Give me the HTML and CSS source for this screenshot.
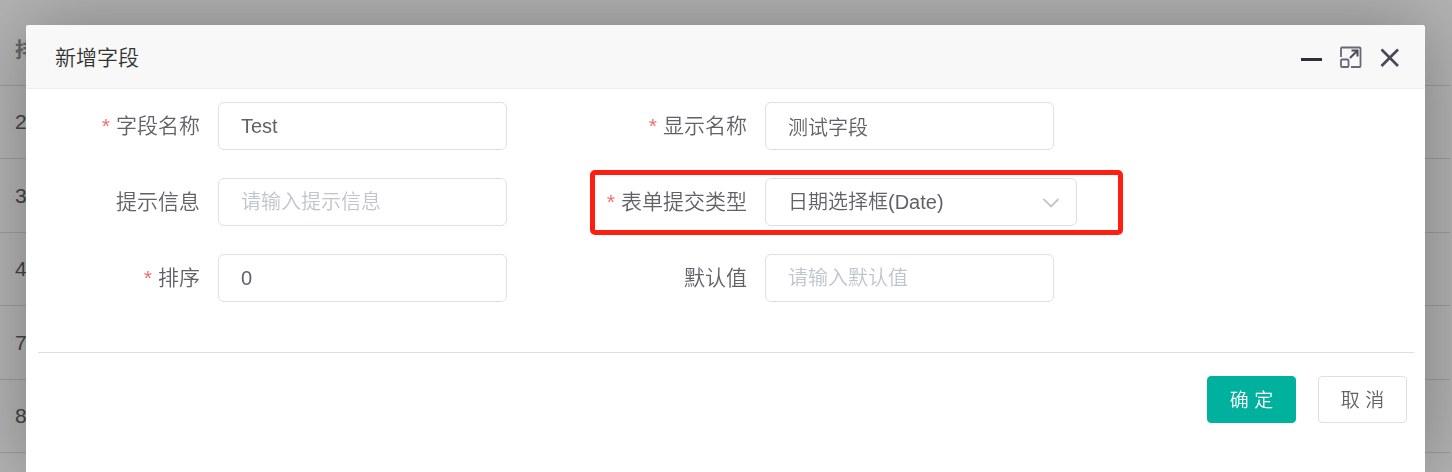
FILE: index.html
```html
<!DOCTYPE html>
<html lang="zh-CN">
<head>
<meta charset="utf-8">
<meta name="viewport" content="width=device-width, initial-scale=1">
<title>新增字段</title>
<link rel="stylesheet" href="styles.css">
</head>
<body>
<table class="list">
  <thead><tr><th>排序</th></tr></thead>
  <tbody>
    <tr><td>2</td></tr>
    <tr><td>3</td></tr>
    <tr><td>4</td></tr>
    <tr><td>7</td></tr>
    <tr><td>8</td></tr>
  </tbody>
</table>
<div class="overlay">
  <section class="dialog" role="dialog" aria-labelledby="dialog-title">
    <header class="dialog-header">
      <h1 class="dialog-title" id="dialog-title">新增字段</h1>
      <div class="dialog-tools">
        <button class="tool" type="button" aria-label="最小化">
          <svg class="tool-icon" viewBox="0 0 22 22"><path d="M0 13.500h21" stroke="#2e2d3c" stroke-width="3"/></svg>
        </button>
        <button class="tool" type="button" aria-label="最大化">
          <svg class="tool-icon" viewBox="0 0 22 22" fill="none" stroke="#6a6876" stroke-width="1.800">
            <path d="M1 11V2.500Q1 1.500 2 1.500H19.500Q20.500 1.500 20.500 2.500V20Q20.500 21 19.500 21H11"/>
            <rect x="1" y="13.500" width="7.500" height="7.500" rx="1"/>
            <path d="M10 12L17 5" stroke="#4a4857" stroke-width="2"/>
            <path d="M11.500 4.500H17.500V10.500" stroke="#4a4857" stroke-width="2"/>
          </svg>
        </button>
        <button class="tool" type="button" aria-label="关闭">
          <svg class="tool-icon" viewBox="0 0 22 22"><path d="M2.500 3.500L19 20M19 3.500L2.500 20" stroke="#4a4857" stroke-width="2.600"/></svg>
        </button>
      </div>
    </header>
    <form class="form">
      <div class="fields">
        <div class="field">
          <label class="label required" for="name">字段名称</label>
          <input class="control" id="name" type="text" value="Test">
        </div>
        <div class="field">
          <label class="label required" for="display">显示名称</label>
          <input class="control" id="display" type="text" value="测试字段">
        </div>
        <div class="field">
          <label class="label" for="hint">提示信息</label>
          <input class="control" id="hint" type="text" placeholder="请输入提示信息">
        </div>
        <div class="field highlighted">
          <label class="label required" for="type">表单提交类型</label>
          <div class="select">
            <select class="control select-control" id="type"><option>日期选择框(Date)</option></select>
            <svg class="chevron" viewBox="0 0 18 12" fill="none"><path d="M1.500 2L9 9.500L16.500 2" stroke="#c0c4cc" stroke-width="1.800"/></svg>
          </div>
        </div>
        <div class="field">
          <label class="label required" for="order">排序</label>
          <input class="control" id="order" type="text" value="0">
        </div>
        <div class="field">
          <label class="label" for="default">默认值</label>
          <input class="control" id="default" type="text" placeholder="请输入默认值">
        </div>
      </div>
      <div class="actions">
        <button class="button primary" type="button">确 定</button>
        <button class="button" type="button">取 消</button>
      </div>
    </form>
  </section>
</div>
</body>
</html>
```
FILE: styles.css
```css
* {
  box-sizing: border-box;
}

body {
  margin: 0;
  background: #fff;
  color: #606266;
  font-family: "Liberation Sans", "Noto Sans CJK SC", sans-serif;
  font-size: 21px;
}

.list {
  width: calc(100% - 2px);
  border-spacing: 0;
  text-align: left;
}

.list th,
.list td {
  height: 73px;
  padding: 0 15px;
  border-bottom: 1px solid #dcdfe6;
  line-height: 24px;
}

.list th {
  height: 86px;
  padding-top: 14px;
  color: #909399;
  font-weight: 700;
}

.list tr:nth-child(even) td {
  height: 74px;
}

.overlay {
  position: fixed;
  inset: 0;
  display: flex;
  padding: 25px 27px 0 26px;
  background: rgba(0, 0, 0, 0.3);
}

.dialog {
  flex: 1;
  border-radius: 3px 3px 0 0;
  background: #fff;
  box-shadow: 1px 1px 75px rgba(0, 0, 0, 0.3);
}

.dialog-header {
  display: flex;
  align-items: center;
  justify-content: space-between;
  height: 64px;
  padding: 0 24px 0 29px;
  border-bottom: 1px solid #eee;
  border-radius: 3px 3px 0 0;
  background: #f8f8f8;
}

.dialog-title {
  margin: 0;
  padding-bottom: 2px;
  color: #333;
  font-size: 21px;
  font-weight: 350;
}

.dialog-tools {
  display: flex;
  gap: 17px;
}

.tool {
  padding: 0;
  border: 0;
  background: none;
}

.tool-icon {
  display: block;
  width: 22px;
  height: 22px;
}

.fields {
  display: grid;
  grid-template-columns: 1fr 1fr;
  gap: 28px 0;
  padding: 13px 305px 50px 0;
}

.field {
  position: relative;
  display: flex;
  align-items: center;
  gap: 18px;
}

.highlighted::after {
  content: "";
  position: absolute;
  inset: -8px -3px -9px 17px;
  border: 5px solid #ff1e10;
  border-radius: 5px;
  pointer-events: none;
}

.label {
  width: 174px;
  padding-bottom: 4px;
  font-weight: 350;
  text-align: right;
  white-space: nowrap;
}

.required::before {
  content: "*";
  margin-right: 6px;
  color: #f56c6c;
}

.control {
  width: 289px;
  height: 48px;
  padding: 0 22px;
  border: 1px solid #dcdfe6;
  border-radius: 6px;
  background: #fff;
  color: #606266;
  font-family: inherit;
  font-size: 20px;
  font-weight: 350;
}

.control::placeholder {
  color: #c0c4cc;
}

.select {
  position: relative;
}

.select-control {
  display: block;
  width: 312px;
  appearance: none;
}

.chevron {
  position: absolute;
  top: 19px;
  right: 17px;
  width: 18px;
  height: 12px;
  pointer-events: none;
}

.actions {
  display: flex;
  justify-content: flex-end;
  gap: 22px;
  margin: 0 11px 0 12px;
  padding: 23px 7px 0 0;
  border-top: 1px solid #dcdfe6;
}

.button {
  width: 89px;
  height: 47px;
  padding: 0 0 3px;
  border: 1px solid #dcdfe6;
  border-radius: 4px;
  background: #fff;
  color: #606266;
  font-family: inherit;
  font-size: 19px;
  font-weight: 350;
}

.primary {
  border-color: #00b19d;
  background: #00b19d;
  color: #fff;
}
```
